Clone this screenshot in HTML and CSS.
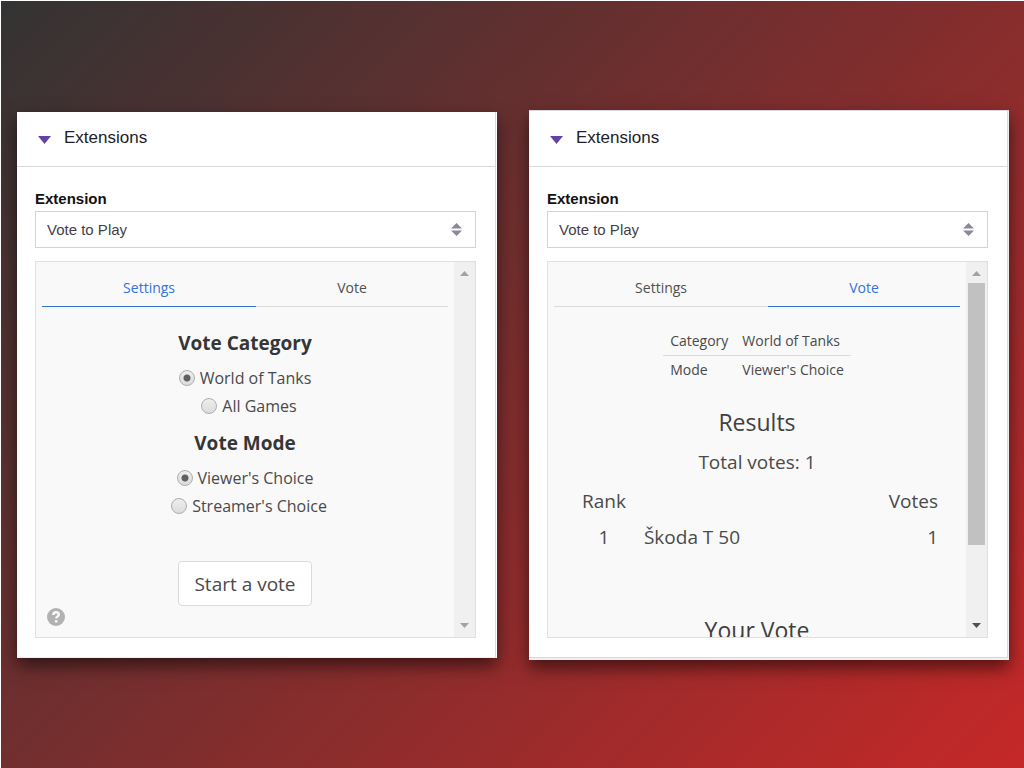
FILE: index.html
```html
<!DOCTYPE html>
<html lang="en">
<head>
<meta charset="utf-8">
<title>Extensions</title>
<link rel="stylesheet" href="styles.css">
</head>
<body>
<main class="page">
  <section class="panel">
    <div class="panel-inner">
      <header class="panel-header">
        <svg class="caret" width="13" height="8" viewBox="0 0 13 8"><path d="M0 0h13L6.500 8z" fill="#6441a5"/></svg>
        <h1 class="panel-title">Extensions</h1>
      </header>
      <div class="panel-body">
        <label class="field-label" for="ext-a">Extension</label>
        <div class="select-wrap">
          <select class="select" id="ext-a"><option>Vote to Play</option></select>
          <svg class="select-arrows" width="11" height="13" viewBox="0 0 11 13"><path d="M0 5.500L5.500 0 11 5.500zM0 7.500h11L5.500 13z" fill="#8d8799"/></svg>
        </div>
        <div class="frame">
          <div class="view">
            <nav class="tabs">
              <button class="tab tab-active" type="button">Settings</button>
              <button class="tab" type="button">Vote</button>
            </nav>
            <form class="settings">
              <h2 class="group-title">Vote Category</h2>
              <label class="option"><input class="radio" type="radio" name="category" checked>World of Tanks</label>
              <label class="option"><input class="radio" type="radio" name="category">All Games</label>
              <h2 class="group-title">Vote Mode</h2>
              <label class="option"><input class="radio" type="radio" name="mode" checked>Viewer's Choice</label>
              <label class="option"><input class="radio" type="radio" name="mode">Streamer's Choice</label>
              <button class="start" type="button">Start a vote</button>
            </form>
            <button class="help" type="button" aria-label="Help">
              <svg width="18" height="18" viewBox="0 0 18 18"><circle cx="9" cy="9" r="9" fill="#b2b2b2"/><path d="M6.200 7C6.300 5 7.500 4.300 9 4.300c1.600 0 2.800.9 2.800 2.300 0 1.900-2.500 1.900-2.500 3.800" fill="none" stroke="#f9f9f9" stroke-width="2.400"/><circle cx="9.200" cy="13.300" r="1.400" fill="#f9f9f9"/></svg>
            </button>
          </div>
          <div class="scrollbar">
            <svg width="9" height="5" viewBox="0 0 9 5"><path d="M0 5L4.500 0 9 5z" fill="#a3a3a3"/></svg>
            <svg class="scroll-down" width="9" height="5" viewBox="0 0 9 5"><path d="M0 0h9L4.500 5z" fill="#a3a3a3"/></svg>
          </div>
        </div>
      </div>
    </div>
  </section>

  <section class="panel panel-framed">
    <div class="panel-inner">
      <header class="panel-header">
        <svg class="caret" width="13" height="8" viewBox="0 0 13 8"><path d="M0 0h13L6.500 8z" fill="#6441a5"/></svg>
        <h1 class="panel-title">Extensions</h1>
      </header>
      <div class="panel-body">
        <label class="field-label" for="ext-b">Extension</label>
        <div class="select-wrap">
          <select class="select" id="ext-b"><option>Vote to Play</option></select>
          <svg class="select-arrows" width="11" height="13" viewBox="0 0 11 13"><path d="M0 5.500L5.500 0 11 5.500zM0 7.500h11L5.500 13z" fill="#8d8799"/></svg>
        </div>
        <div class="frame">
          <div class="view">
            <nav class="tabs">
              <button class="tab" type="button">Settings</button>
              <button class="tab tab-active" type="button">Vote</button>
            </nav>
            <div class="results">
              <table class="summary">
                <tr><td>Category</td><td>World of Tanks</td></tr>
                <tr><td>Mode</td><td>Viewer's Choice</td></tr>
              </table>
              <h2 class="results-title">Results</h2>
              <p class="total">Total votes: 1</p>
              <table class="ranking">
                <tr><th class="rank">Rank</th><th></th><th class="votes">Votes</th></tr>
                <tr><td class="rank">1</td><td>Škoda T 50</td><td class="votes">1</td></tr>
              </table>
              <h2 class="results-title your-vote">Your Vote</h2>
            </div>
          </div>
          <div class="scrollbar">
            <svg width="9" height="5" viewBox="0 0 9 5"><path d="M0 5L4.500 0 9 5z" fill="#a3a3a3"/></svg>
            <div class="thumb"></div>
            <svg class="scroll-down" width="9" height="5" viewBox="0 0 9 5"><path d="M0 0h9L4.500 5z" fill="#505050"/></svg>
          </div>
        </div>
      </div>
    </div>
  </section>
</main>
</body>
</html>
```
FILE: styles.css
```css
* { box-sizing: border-box; }

body {
  margin: 0;
  padding: 1px 0 0 1px;
  background: #fff;
  color: #4a4a4a;
  font-family: "Open Sans", "Noto Sans", sans-serif;
}

h1, h2, p { margin: 0; }

button { font-family: inherit; cursor: pointer; }

.page {
  display: grid;
  grid-template-columns: 1fr 1fr;
  gap: 32px;
  align-items: center;
  min-height: calc(100vh - 1px);
  padding: 0 15px 0 16px;
  background: linear-gradient(135deg, #333 0%, #c62828 100%);
}

.panel {
  padding-right: 1px;
  background: #fff;
  box-shadow: 0 8px 16px rgba(0, 0, 0, 0.55);
}

.panel-inner {
  border-right: 1px solid #dad8de;
  border-bottom: 1px solid #efefef;
}

.panel-framed {
  padding-bottom: 2px;
  background: #f0eef3;
  border-top: 1px solid #dad8de;
}

.panel-framed .panel-inner {
  padding-top: 1px;
  background: #fff;
  border-bottom-color: #dad8de;
}

.panel-header {
  display: flex;
  align-items: center;
  gap: 13px;
  height: 55px;
  padding: 0 21px 2px;
  border-bottom: 1px solid #dad8de;
}

.caret { margin-top: 4px; }

.panel-title {
  color: #232127;
  font: 400 17px/22px "Liberation Sans", Arial, sans-serif;
}

.panel-body { padding: 22px 19px 19px 18px; }

.field-label {
  display: block;
  color: #111;
  font: 700 15px/20px "Liberation Sans", Arial, sans-serif;
}

.select-wrap {
  position: relative;
  margin: 2px 0 13px;
}

.select {
  display: block;
  width: 100%;
  height: 37px;
  padding: 2px 11px 0;
  border: 1px solid #d3d3d6;
  border-radius: 0;
  background: #fff;
  color: #433f4a;
  font: 400 15px/20px "Liberation Sans", Arial, sans-serif;
  appearance: none;
}

.select-arrows {
  position: absolute;
  top: 12px;
  right: 14px;
  pointer-events: none;
}

.frame {
  display: flex;
  height: 377px;
  border: 1px solid #e0e0e0;
  background: #f9f9f9;
  overflow: hidden;
}

.view {
  position: relative;
  flex: 1;
  padding: 6px 6px 0;
}

.tabs { display: flex; }

.tab {
  flex: 1 1 auto;
  height: 39px;
  padding: 2px 0 0;
  border: 0;
  border-bottom: 1px solid #dadada;
  background: none;
  color: #505050;
  font-size: 14px;
  line-height: 20px;
}

.tab-active {
  border-color: #3273dc;
  color: #3273dc;
}

.scrollbar {
  display: flex;
  flex-direction: column;
  align-items: center;
  width: 21px;
  padding: 9px 0;
  background: #f0f0f0;
}

.thumb {
  width: 17px;
  height: 262px;
  margin-top: 7px;
  background: #c1c1c1;
}

.scroll-down { margin-top: auto; }

.settings {
  display: flex;
  flex-direction: column;
  align-items: center;
  padding-top: 22px;
}

.group-title {
  margin-bottom: 7px;
  color: #363636;
  font-size: 19px;
  font-weight: 700;
  line-height: 28px;
}

.option {
  display: flex;
  align-items: center;
  gap: 5px;
  font-size: 16px;
  line-height: 28px;
}

.option + .option {
  margin-bottom: 9px;
  padding-left: 8px;
}

.radio {
  width: 16px;
  height: 16px;
  margin: 0;
  border: 1px solid #adadad;
  border-radius: 50%;
  background: linear-gradient(#eee, #dcdcdc);
  appearance: none;
}

.radio:checked {
  background: radial-gradient(circle, #606060 3px, transparent 4px), linear-gradient(#eee, #dcdcdc);
}

.start {
  height: 45px;
  margin-top: 32px;
  padding: 2px 15px 0;
  border: 1px solid #dbdbdb;
  border-radius: 4px;
  background: #fff;
  color: #4a4a4a;
  font-size: 19px;
  line-height: 28px;
}

.help {
  position: absolute;
  bottom: 11px;
  left: 11px;
  padding: 0;
  border: 0;
  background: none;
  line-height: 0;
}

.results {
  display: flex;
  flex-direction: column;
  align-items: center;
  padding-top: 20px;
}

.summary {
  border-collapse: collapse;
  font-size: 14px;
  line-height: 20px;
}

.summary td { padding: 4px 7px; }

.summary tr:first-child td { border-bottom: 1px solid #dbdbdb; }

.results-title {
  margin-top: 22px;
  color: #404040;
  font-size: 23px;
  font-weight: 400;
  line-height: 32px;
}

.total {
  margin: 10px 0 7px;
  font-size: 19px;
  line-height: 28px;
}

.ranking {
  width: 100%;
  padding: 0 13px;
  border-spacing: 0;
  font-size: 19px;
  line-height: 28px;
}

.ranking th { font-weight: 400; }

.ranking td,
.ranking th { padding: 4px 9px; }

.ranking .rank {
  width: 1px;
  padding-left: 15px;
  text-align: center;
}

.ranking .votes { text-align: right; }

.your-vote { margin-top: 59px; }
```
